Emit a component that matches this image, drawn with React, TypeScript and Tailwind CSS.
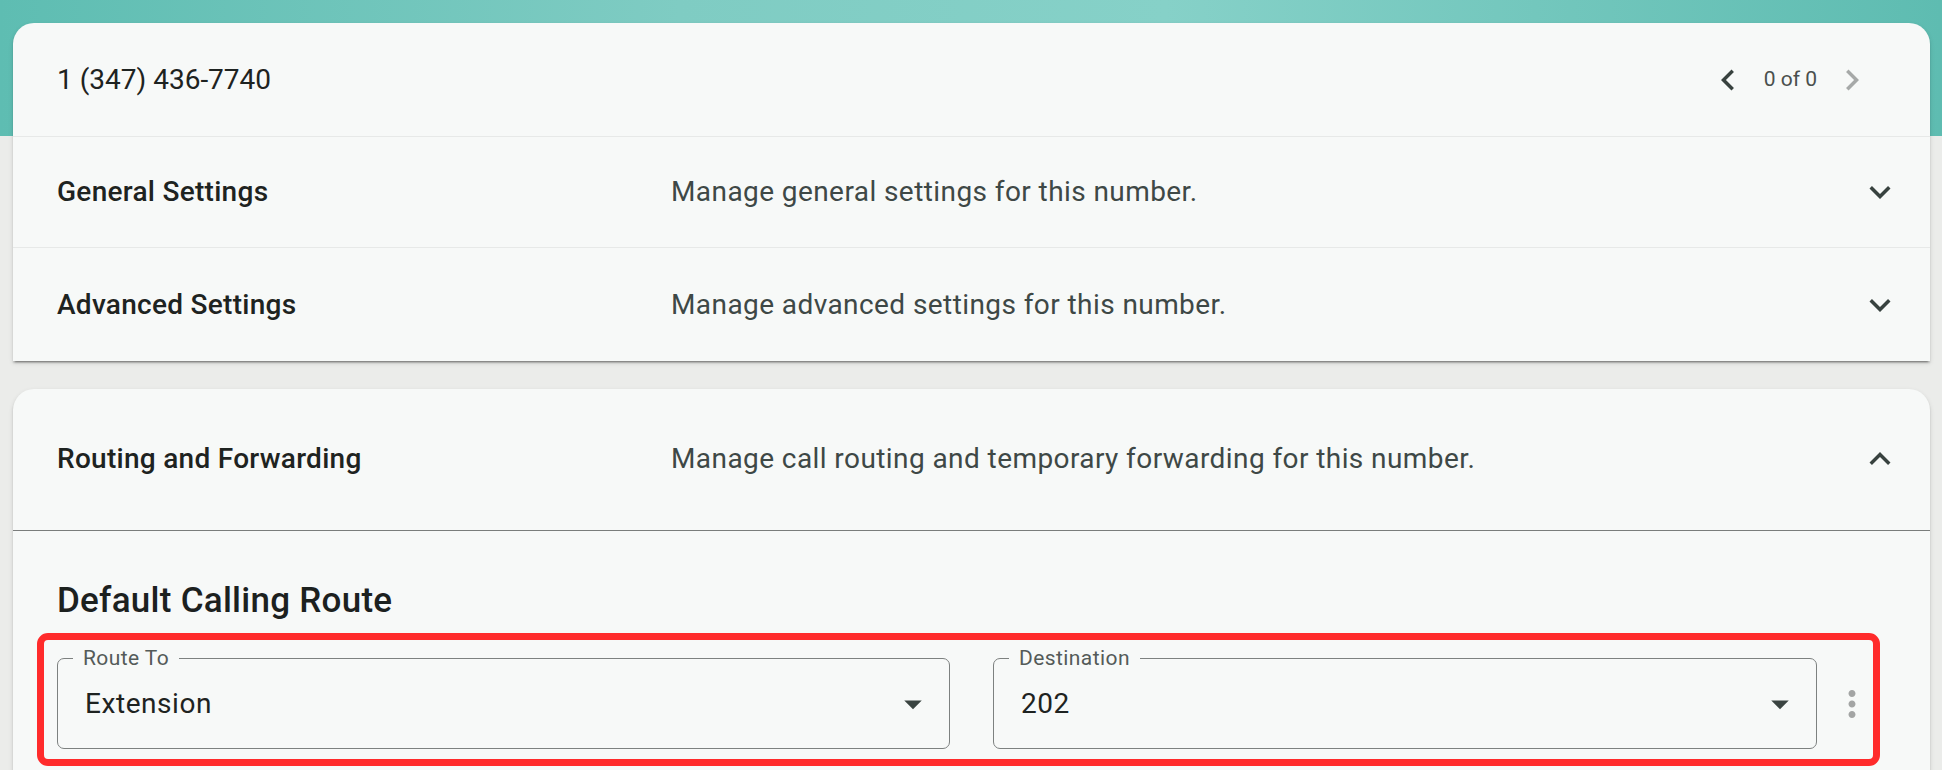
import React from "react";

const icons = {
  chevronLeft: "M15.41 7.41 14 6l-6 6 6 6 1.41-1.41L10.83 12z",
  chevronRight: "M10 6 8.59 7.41 13.17 12l-4.58 4.59L10 18l6-6z",
  expandMore: "M16.59 8.59 12 13.17 7.41 8.59 6 10l6 6 6-6z",
  expandLess: "m12 8-6 6 1.41 1.41L12 10.83l4.59 4.58L18 14z",
  arrowDrop: "M7 10l5 5 5-5z",
  moreVert:
    "M12 8c1.1 0 2-.9 2-2s-.9-2-2-2-2 .9-2 2 .9 2 2 2m0 2c-1.1 0-2 .9-2 2s.9 2 2 2 2-.9 2-2-.9-2-2-2m0 6c-1.1 0-2 .9-2 2s.9 2 2 2 2-.9 2-2-.9-2-2-2",
};

function Icon({ d, className }: { d: string; className?: string }) {
  return (
    <svg viewBox="0 0 24 24" className={`w-[42px] h-[42px] shrink-0 ${className ?? ""}`} fill="currentColor">
      <path d={d} />
    </svg>
  );
}

function SettingsRow({
  title,
  description,
  open,
  className,
}: {
  title: string;
  description: string;
  open?: boolean;
  className?: string;
}) {
  return (
    <div className={`flex items-center pl-[44px] pr-[29px] ${className ?? ""}`}>
      <div className="w-[614px] shrink-0 text-[28px] font-medium text-[#1e2321] tracking-[0.01em]">{title}</div>
      <div className="flex-1 text-[28px] text-[#3e4846] tracking-[0.015em]">{description}</div>
      <Icon d={open ? icons.expandLess : icons.expandMore} className="text-[#38423f]" />
    </div>
  );
}

function SelectField({ label, value, width }: { label: string; value: string; width: string }) {
  return (
    <div className={`relative h-[91px] ${width} shrink-0 rounded-[7px] border border-[#7d8180] flex items-center pl-[27px] pr-[15px]`}>
      <span className="absolute -top-[11px] left-[15px] px-[10px] bg-[#f7f9f8] text-[21px] leading-[21px] text-[#545b59] tracking-[0.02em]">
        {label}
      </span>
      <span className="flex-1 text-[28px] text-[#1e2321] tracking-[0.02em]">{value}</span>
      <Icon d={icons.arrowDrop} className="text-[#3a4441]" />
    </div>
  );
}

export default function App() {
  return (
    <div className="min-h-screen w-full font-['Roboto',sans-serif] bg-[#ebecea] bg-[linear-gradient(to_right,#5ebdb2,#7fccc3_35%,#86d1c8_60%,#5ebcb1)] bg-no-repeat bg-[length:100%_136px] pl-[13px] pr-[12px] pt-[23px] pb-[40px]">
      <div className="bg-[#f7f9f8] rounded-t-[21px] shadow-[0_3px_2px_-2px_rgba(0,0,0,0.35),0_2px_2px_0_rgba(0,0,0,0.14),0_2px_5px_0_rgba(0,0,0,0.12)]">
        <div className="h-[113px] flex items-center pl-[44px] pr-[57px]">
          <div className="flex-1 text-[28px] text-[#1e2321]">1 (347) 436-7740</div>
          <Icon d={icons.chevronLeft} className="text-[#38423f]" />
          <span className="ml-[15px] mr-[14px] text-[21px] text-[#4a504e]">0 of 0</span>
          <Icon d={icons.chevronRight} className="text-[#a6a9a8]" />
        </div>
        <SettingsRow
          title="General Settings"
          description="Manage general settings for this number."
          className="h-[111px] border-t border-[#e7e9e8]"
        />
        <SettingsRow
          title="Advanced Settings"
          description="Manage advanced settings for this number."
          className="h-[114px] border-t border-[#e7e9e8]"
        />
      </div>

      <div className="mt-[28px] bg-[#f7f9f8] rounded-t-[21px] pb-[60px] shadow-[0_2px_2px_0_rgba(0,0,0,0.14),0_2px_5px_0_rgba(0,0,0,0.12)]">
        <SettingsRow
          title="Routing and Forwarding"
          description="Manage call routing and temporary forwarding for this number."
          open
          className="h-[142px] pb-[2px] border-b border-[#7a7d7c]"
        />
        <div className="pt-[42px]">
          <h3 className="pl-[44px] text-[35px] leading-[56px] font-medium text-[#1c211f] tracking-[0.0075em]">
            Default Calling Route
          </h3>
          <div className="mt-[4px] ml-[24px] w-[1843px] rounded-[11px] border-[7px] border-[#ff2b2b] pt-[18px] pl-[13px] pb-[10px]">
            <div className="flex items-center">
              <SelectField label="Route To" value="Extension" width="w-[893px]" />
              <div className="w-[43px] shrink-0" />
              <SelectField label="Destination" value="202" width="w-[824px]" />
              <div className="w-[14px] shrink-0" />
              <Icon d={icons.moreVert} className="text-[#a3a5a4]" />
            </div>
          </div>
        </div>
      </div>
    </div>
  );
}
